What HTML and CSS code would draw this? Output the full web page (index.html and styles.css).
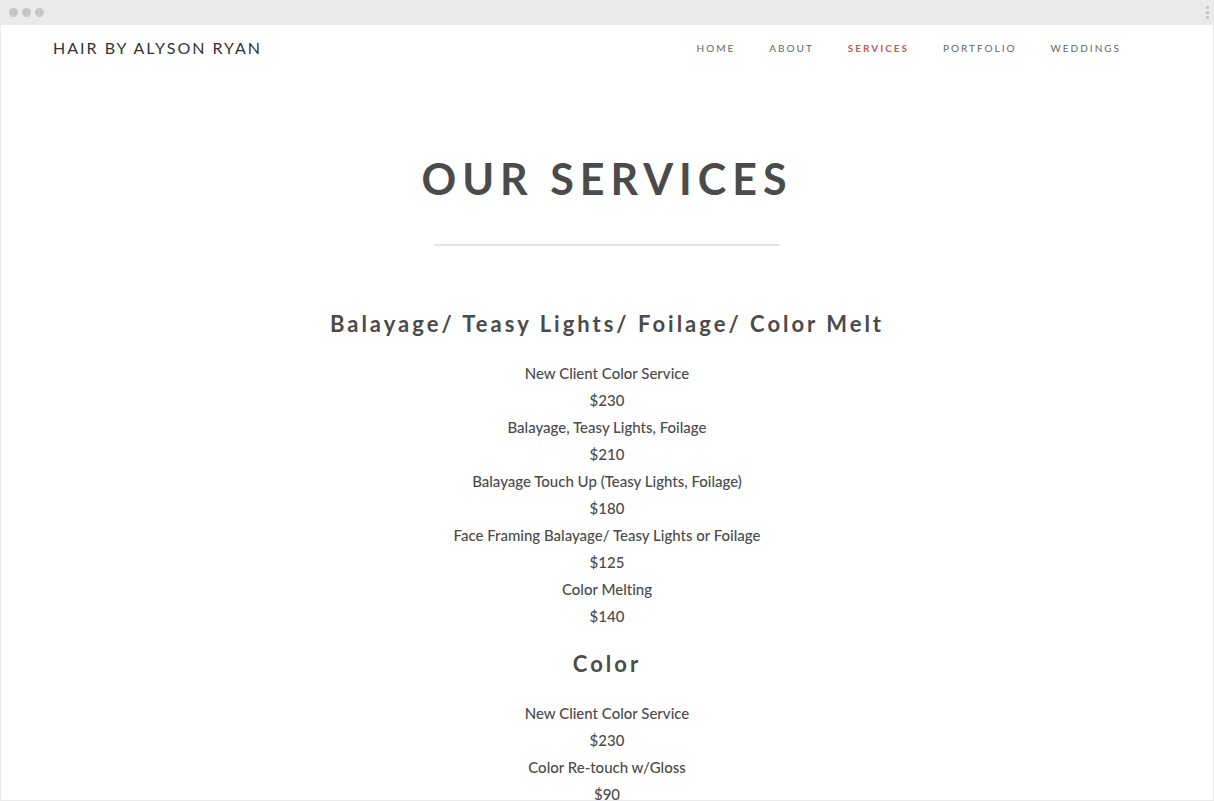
FILE: index.html
```html
<!DOCTYPE html>
<html lang="en">
<head>
<meta charset="utf-8">
<meta name="viewport" content="width=device-width, initial-scale=1">
<title>Services — Hair by Alyson Ryan</title>
<link rel="stylesheet" href="styles.css">
</head>
<body>
<div class="window">
  <div class="titlebar">
    <div class="lights"><span class="light"></span><span class="light"></span><span class="light"></span></div>
    <div class="kebab"><span class="kebab-dot"></span><span class="kebab-dot"></span><span class="kebab-dot"></span></div>
  </div>
  <div class="viewport">
    <header class="site-header">
      <a class="brand" href="#">HAIR BY ALYSON RYAN</a>
      <nav class="nav">
        <a class="nav-link" href="#">HOME</a>
        <a class="nav-link" href="#">ABOUT</a>
        <a class="nav-link nav-link-active" href="#" aria-current="page">SERVICES</a>
        <a class="nav-link" href="#">PORTFOLIO</a>
        <a class="nav-link" href="#">WEDDINGS</a>
      </nav>
    </header>
    <main class="content">
      <h1 class="title">OUR SERVICES</h1>
      <hr class="rule">
      <section class="group">
        <h2 class="group-title">Balayage/ Teasy Lights/ Foilage/ Color Melt</h2>
        <dl class="prices">
          <dt>New Client Color Service</dt><dd>$230</dd>
          <dt>Balayage, Teasy Lights, Foilage</dt><dd>$210</dd>
          <dt>Balayage Touch Up (Teasy Lights, Foilage)</dt><dd>$180</dd>
          <dt>Face Framing Balayage/ Teasy Lights or Foilage</dt><dd>$125</dd>
          <dt>Color Melting</dt><dd>$140</dd>
        </dl>
      </section>
      <section class="group">
        <h2 class="group-title">Color</h2>
        <dl class="prices">
          <dt>New Client Color Service</dt><dd>$230</dd>
          <dt>Color Re-touch w/Gloss</dt><dd>$90</dd>
        </dl>
      </section>
    </main>
  </div>
</div>
</body>
</html>
```
FILE: styles.css
```css
* { box-sizing: border-box; }

body {
  margin: 0;
  background: #fff;
  color: #4b4b4b;
  font-family: Lato, "Open Sans", sans-serif;
  font-variant-ligatures: no-common-ligatures;
}

.window {
  display: flex;
  flex-direction: column;
  height: 100vh;
}

.titlebar {
  display: flex;
  flex: none;
  align-items: center;
  justify-content: space-between;
  height: 25px;
  padding: 0 5px 0 9px;
  background: #eaeaea;
}

.lights { display: flex; gap: 4px; }

.light {
  width: 9px;
  height: 9px;
  border-radius: 50%;
  background: #c6c6c6;
}

.kebab { display: grid; gap: 2px; }

.kebab-dot {
  width: 3px;
  height: 3px;
  border-radius: 1px;
  background: #c6c6c6;
}

.viewport {
  flex: 1;
  min-height: 0;
  overflow: hidden;
  border: 1px solid #eaeaea;
  border-top: 0;
}

.site-header {
  display: flex;
  align-items: center;
  justify-content: space-between;
  height: 46px;
  padding: 0 92px 0 52px;
}

.brand {
  color: #333;
  font-size: 16px;
  font-weight: 400;
  line-height: 20px;
  letter-spacing: 2px;
  text-decoration: none;
}

.nav { display: flex; gap: 34px; }

.nav-link {
  color: #666;
  font-size: 10px;
  letter-spacing: 2px;
  text-decoration: none;
}

.nav-link-active {
  color: #c0595c;
  font-weight: 700;
}

.content { text-align: center; }

.title {
  margin: 82px 0 0;
  font-size: 43px;
  line-height: 52px;
  letter-spacing: 6px;
}

.rule {
  width: 346px;
  height: 2px;
  margin: 39px auto 64px;
  border: 0;
  background: #e4e4e4;
}

.group { margin-bottom: 20px; }

.group-title {
  margin: 0 0 22px;
  font-size: 22px;
  line-height: 28px;
  letter-spacing: 3px;
}

.prices {
  margin: 0;
  font-size: 15px;
  font-weight: 500;
  line-height: 27px;
}

.prices dd { margin: 0; }
```
